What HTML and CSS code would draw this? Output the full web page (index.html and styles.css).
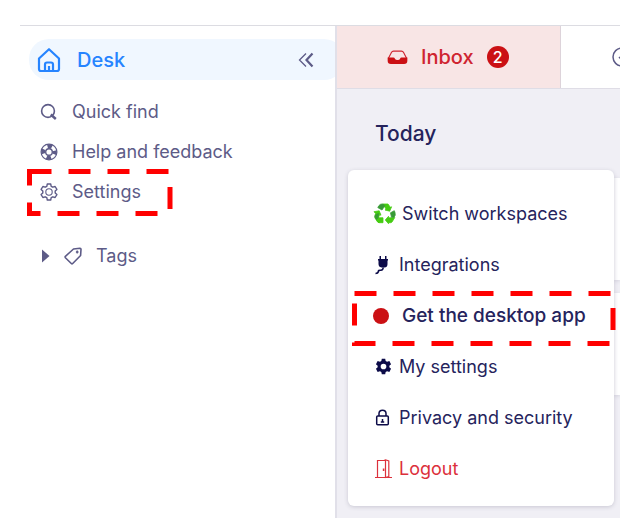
FILE: index.html
```html
<!DOCTYPE html>
<html lang="en">
<head>
<meta charset="utf-8">
<meta name="viewport" content="width=device-width, initial-scale=1">
<title>Desk</title>
<link rel="stylesheet" href="styles.css">
</head>
<body>
<div class="app">
  <aside class="sidebar">
    <div class="desk">
      <a class="desk-link" href="#desk">
        <svg class="icon-home" viewBox="0 0 24 26" fill="none" stroke="currentColor" stroke-width="2.200" stroke-linejoin="round"><path d="M2 11.500L12 2.200L22 11.500V22Q22 24 20 24H4Q2 24 2 22Z"/><path d="M8 24V17.500Q8 15.500 10 15.500H14Q16 15.500 16 17.500V24M12 19V24"/></svg>
        Desk
      </a>
      <button class="collapse" type="button" aria-label="Collapse sidebar">
        <svg viewBox="0 0 16 16" width="16" height="16" fill="none" stroke="currentColor"><path stroke-width="1.300" d="M8 1.500L1.500 8L8 14.500"/><path stroke-width="2.200" d="M14.500 1.500L8.500 8L14.500 14.500"/></svg>
      </button>
    </div>
    <nav class="links">
      <a class="link" href="#find">
        <svg class="icon" viewBox="0 0 18 18" fill="none" stroke="currentColor" stroke-width="1.600"><circle cx="8" cy="8" r="6.400"/><path stroke-width="2.400" d="M10.800 11.500L15.800 16"/></svg>
        Quick find
      </a>
      <a class="link" href="#help">
        <svg class="icon" viewBox="0 0 18 18" fill="none" stroke="currentColor"><circle cx="9" cy="9" r="7.900" stroke-width="1.200"/><circle cx="9" cy="9" r="3.300" stroke-width="1.400"/><circle cx="9" cy="9" r="5.700" stroke-width="4" stroke-dasharray="4.480 4.480" stroke-dashoffset="2.240"/></svg>
        Help and feedback
      </a>
      <a class="link marked" href="#settings">
        <svg class="icon" viewBox="0 0 18 18" fill="none" stroke="currentColor" stroke-width="1.400" stroke-linejoin="round"><path d="M7.300 1H10.700L11.200 3.300L12.800 4.200L15.100 3.500L16.900 6.400L15.200 8V10L16.900 11.600L15.100 14.500L12.800 13.800L11.200 14.700L10.700 17H7.300L6.800 14.700L5.200 13.800L2.900 14.500L1.100 11.600L2.800 10V8L1.100 6.400L2.900 3.500L5.200 4.200L6.800 3.300Z"/><circle cx="9" cy="9" r="3.200" stroke-width="1.100"/></svg>
        Settings
        <svg class="mark mark-settings" viewBox="0 0 146 47" aria-hidden="true"><rect x="2.500" y="2.500" width="140.500" height="42"/></svg>
      </a>
    </nav>
    <button class="tags" type="button">
      <svg width="8" height="14" viewBox="0 0 8 14" fill="currentColor"><path d="M0 0.500L7.500 7L0 13.500Z"/></svg>
      <svg width="18" height="18" viewBox="0 0 18 18" fill="none" stroke="currentColor" stroke-width="1.600" stroke-linejoin="round"><path d="M9.500 2L16 1.200Q17 1.200 17 2.200L16.600 8.500L8.700 16.500Q8 17.100 7.300 16.500L1.400 10.700Q.8 10 1.400 9.300Z"/><path stroke-width="1.300" d="M13.200 3.500V6.500M11.900 5H14.500"/></svg>
      Tags
    </button>
  </aside>

  <main class="main">
    <nav class="tabs">
      <a class="tab tab-inbox" href="#inbox">
        <svg width="21" height="15" viewBox="0 0 22 16" fill="currentColor"><path fill="none" stroke="currentColor" stroke-width="1.200" d="M1.200 9L4.500 2.600Q5.200 1.200 6.800 1.200H15.200Q16.800 1.200 17.500 2.600L20.800 9"/><path fill="#cb1014" d="M.5 8H6.500Q7.800 8 8.300 9.300T11 10.700T13.700 9.300T15.500 8H21.500V11.500Q21.500 15 18 15H4Q.5 15 .5 11.500Z"/></svg>
        Inbox
        <span class="badge">2</span>
      </a>
      <a class="tab tab-done" href="#done" aria-label="Done">
        <svg width="20" height="20" viewBox="0 0 20 20" fill="none" stroke="currentColor" stroke-width="1.500"><circle cx="10" cy="10" r="9"/><path d="M7 10L9.500 12.500L14 7.500"/></svg>
      </a>
    </nav>
    <section class="content">
      <h1 class="heading">Today</h1>
      <div class="feed">
        <div class="card"></div>
        <div class="card"></div>
        <div class="menu">
          <button class="item wide" type="button">
            <span class="slot"><svg width="23" height="21" viewBox="0 0 23 21" stroke-linejoin="round" stroke-width=".8">
              <g fill="#45cc12" stroke="#45cc12"><path d="M9.500 1H15L17.300 4.300L18.600 3.800L16.700 8.200L12 7L13.200 6.200L12 4.500Z"/><path d="M1 8.700L6.200 7.800L8 12.200L6.600 11.800L5 15.500L6.500 19.500H5.200L2.300 15.500Q1.300 14 2 12.500L2.600 10.500Z"/><path d="M21.800 14.500L19 19Q18.500 19.700 17.500 19.700H15.500V20.700L12.300 17L15.500 13.300V14.800H20Z"/></g>
              <g fill="#379a36" stroke="#379a36"><path d="M9 1Q7 1 5.800 2.800L4.800 4.600L9 7L11.800 2.700Q10.800 1 9 1Z"/><path d="M17.500 9.800L21.300 7.700L22 9.500Q23 12.500 21 14.300H18.500Z"/><path d="M2.500 14.800H10V19.700H6.500Q5 19.700 4.300 18.500Z" fill="#45cc12" stroke="#45cc12"/><path d="M2.300 12L5.500 10.500L5 14.800L3.500 16.500L2 14Z"/></g>
            </svg></span>
            Switch workspaces
          </button>
          <button class="item" type="button">
            <span class="slot"><svg width="14" height="20" viewBox="0 0 14 20" fill="currentColor"><path d="M4.500 1H6V4H10V1H11.500V4H13V5.500H12.500V9Q12.500 12 10 12.500H6.500Q3.500 12 3.500 9V5.500H3V4H4.500Z"/><path fill="none" stroke="currentColor" stroke-width="1.600" d="M8.200 12.500Q8 15.500 5.500 15.200Q3.200 15 3.400 16.800Q3 18.500 .5 18.500"/></svg></span>
            Integrations
          </button>
          <button class="item wide strong marked" type="button">
            <span class="slot"><span class="dot"></span></span>
            Get the desktop app
            <svg class="mark mark-app" viewBox="0 0 264 55" aria-hidden="true"><rect x="2.500" y="2.500" width="258.500" height="50"/></svg>
          </button>
          <button class="item" type="button">
            <span class="slot"><svg width="17" height="17" viewBox="0 0 18 18" fill="currentColor" fill-rule="evenodd"><path d="M7.200 .8H10.800L11.300 3.200L12.800 4.100L15.200 3.300L17 6.500L15.200 8.100V9.900L17 11.500L15.200 14.700L12.800 13.900L11.300 14.800L10.800 17.200H7.200L6.700 14.800L5.200 13.900L2.800 14.700L1 11.500L2.800 9.900V8.100L1 6.500L2.800 3.300L5.200 4.100L6.700 3.200ZM9 6A3 3 0 1 0 9 12A3 3 0 1 0 9 6Z"/></svg></span>
            My settings
          </button>
          <button class="item" type="button">
            <span class="slot"><svg width="15" height="17" viewBox="0 0 15 17" fill="none" stroke="currentColor" stroke-width="1.500"><path d="M4 7V4.500Q4 1.200 7.500 1.200T11 4.500V7"/><rect x="1.700" y="7" width="11.600" height="8.800" rx="1"/><path d="M7.500 10V13.500M5.800 13H9.200"/></svg></span>
            Privacy and security
          </button>
          <button class="item danger" type="button">
            <span class="slot"><svg width="17" height="20" viewBox="0 0 17 20" fill="none" stroke="currentColor" stroke-width="1.200"><path d="M0 18.500H4M12.500 18.500H17M2.500 18.500V1.500H10.500V18.500L13.800 17.500V2L10.500 .8L9 1.500M2.500 18.500H10.500"/><path stroke-width="1.600" d="M8.600 9.500V12"/></svg></span>
            Logout
          </button>
        </div>
      </div>
    </section>
  </main>
</div>
</body>
</html>
```

FILE: styles.css
```css
* {
  box-sizing: border-box;
}

body {
  margin: 0;
  padding: 25px 0 0 20px;
  background: #fff;
  color: #25235c;
  font: 18px/24px "Inter", "Open Sans", sans-serif;
}

a {
  color: inherit;
  text-decoration: none;
}

button {
  border: 0;
  background: none;
  padding: 0;
  color: inherit;
  font: inherit;
  text-align: left;
  cursor: pointer;
}

svg {
  display: block;
  flex: none;
}

.app {
  display: flex;
  min-height: calc(100vh - 25px);
  border-top: 1px solid #dcdce2;
  overflow: hidden;
}

.sidebar {
  flex: none;
  width: 317px;
  padding: 13px 0 0 9px;
  border-right: 2px solid #e1e0e9;
  color: #5d5b87;
  overflow: hidden;
}

.desk {
  display: flex;
  align-items: center;
  justify-content: space-between;
  height: 41px;
  margin-right: -9px;
  padding: 0 30px 0 8px;
  border-radius: 20px;
  background: #f0f7ff;
}

.desk-link {
  display: flex;
  align-items: center;
  gap: 16px;
  color: #2684ff;
  font-size: 20px;
  font-weight: 500;
}

.icon-home {
  width: 24px;
  height: 26px;
}

.links {
  display: flex;
  flex-direction: column;
  margin-top: 12px;
}

.link {
  display: flex;
  align-items: center;
  gap: 14px;
  height: 40px;
  padding-left: 11px;
}

.icon {
  width: 18px;
  height: 18px;
}

.tags {
  display: flex;
  align-items: center;
  gap: 14px;
  height: 40px;
  margin-top: 24px;
  padding-left: 13px;
}

.main {
  flex: 1;
  min-width: 0;
  display: flex;
  flex-direction: column;
  background: #f0eff5;
}

.tabs {
  display: flex;
  height: 63px;
  border-bottom: 1px solid #dfdde6;
  background: #fff;
}

.tab {
  flex: none;
  display: flex;
  align-items: center;
  gap: 13px;
}

.tab-inbox {
  width: 224px;
  padding-left: 50px;
  border-right: 1px solid #ddd3da;
  background: #f8e5e5;
  color: #cf2430;
  font-size: 20px;
  font-weight: 500;
}

.tab-done {
  padding-left: 51px;
  color: #5d5b87;
}

.badge {
  width: 22px;
  height: 22px;
  border-radius: 50%;
  background: #cb1014;
  color: #fff;
  font-size: 16px;
  line-height: 22px;
  font-weight: 500;
  text-align: center;
}

.content {
  padding: 33px 0 0 11px;
}

.heading {
  margin: 0 0 24px 27px;
  font-size: 21px;
  line-height: 24px;
  font-weight: 500;
}

.feed {
  position: relative;
  display: flex;
  flex-direction: column;
  gap: 13px;
  padding: 8px 0 0 12px;
}

.card {
  height: 102px;
  background: #fff;
  box-shadow: 0 1px 4px #d2d0dc;
}

.menu {
  position: absolute;
  top: 0;
  left: 0;
  width: 266px;
  padding: 18px 0 12px 25px;
  border-radius: 6px;
  background: #fff;
  box-shadow: 0 1px 4px #c9c8d3;
}

.item {
  display: flex;
  align-items: center;
  width: 100%;
  height: 51px;
  white-space: nowrap;
}

.slot {
  flex: none;
  width: 26px;
  padding-left: 2px;
  color: #0c0b48;
}

.wide .slot {
  width: 29px;
  padding-left: 0;
}

.strong {
  font-size: 19px;
  font-weight: 500;
}

.danger,
.danger .slot {
  color: #dc303b;
}

.dot {
  display: block;
  width: 16px;
  height: 16px;
  border-radius: 50%;
  background: #cb1014;
}

.marked {
  position: relative;
}

.mark {
  position: absolute;
  fill: none;
  stroke: #f00;
  stroke-width: 5px;
  stroke-dasharray: 22 17;
  pointer-events: none;
}

.mark-settings {
  top: -3px;
  left: -2px;
  width: 146px;
  height: 47px;
}

.mark-app {
  top: 1px;
  left: -21px;
  width: 264px;
  height: 55px;
}
```
